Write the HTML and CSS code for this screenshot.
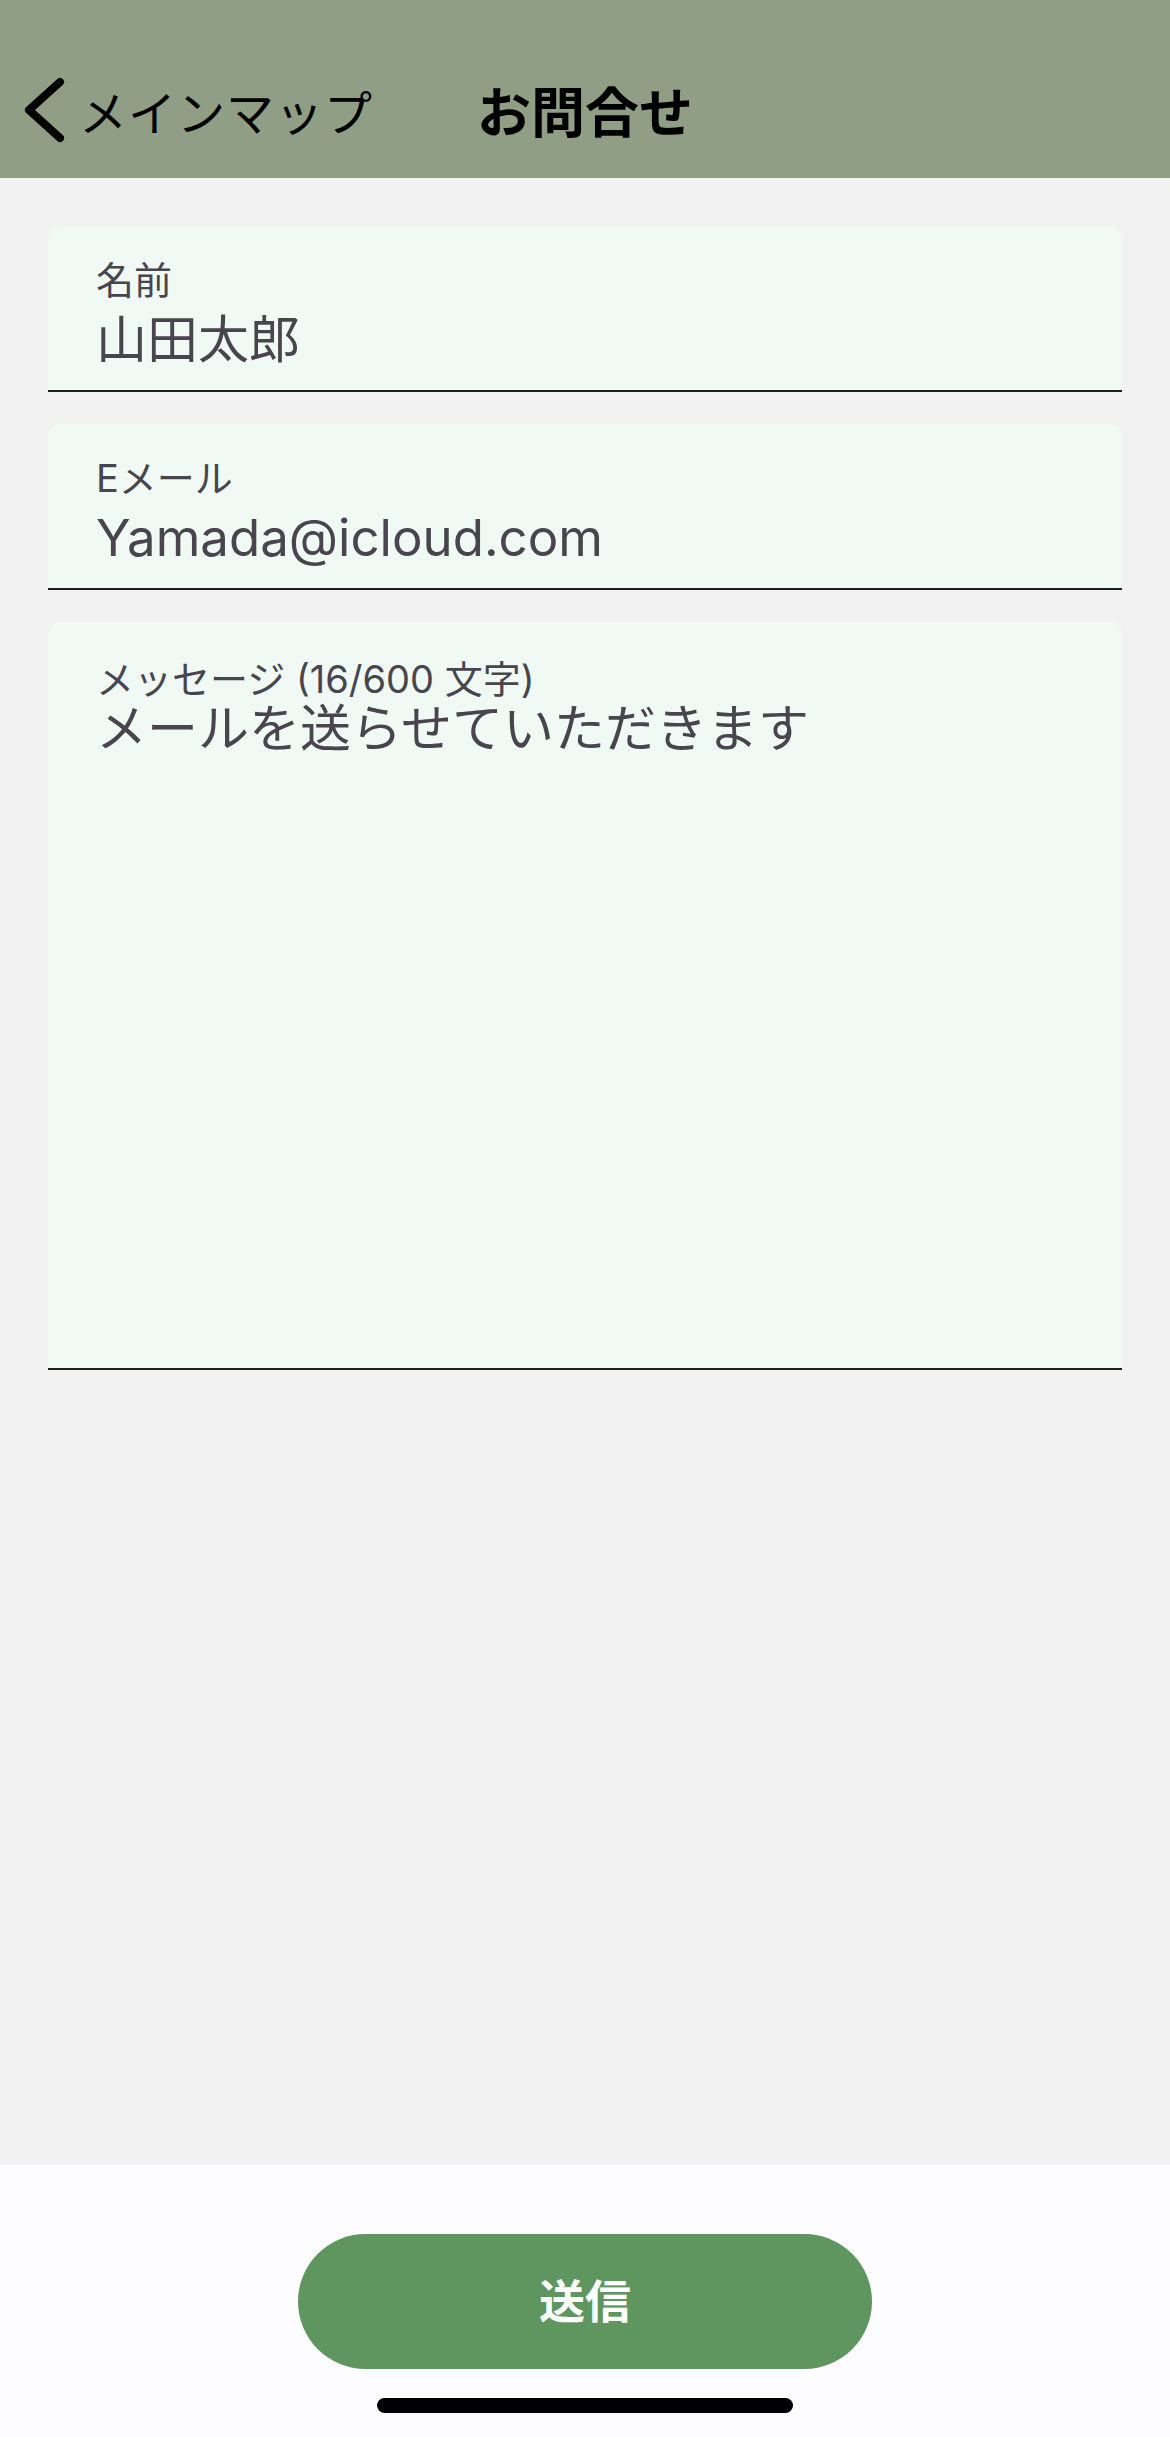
FILE: index.html
```html
<!DOCTYPE html>
<html lang="ja">
<head>
<meta charset="utf-8">
<title>お問合せ</title>
<link rel="stylesheet" href="styles.css">
</head>
<body>
<div class="app">
  <header class="topbar">
    <a class="back" href="#">
      <svg class="chev" width="46" height="68" viewBox="0 0 46 68" aria-hidden="true">
        <polyline points="40,6 9,34 40,62" fill="none" stroke="#000" stroke-width="8" stroke-linecap="round" stroke-linejoin="round"/>
      </svg>
      <span class="back-text">メインマップ</span>
    </a>
    <h1 class="title">お問合せ</h1>
    <div class="spacer"></div>
  </header>

  <main class="form">
    <div class="field">
      <div class="label">名前</div>
      <div class="value">山田太郎</div>
    </div>
    <div class="field">
      <div class="label">Eメール</div>
      <div class="value">Yamada@icloud.com</div>
    </div>
    <div class="field field-multi">
      <div class="label">メッセージ (16/600 文字)</div>
      <div class="value">メールを送らせていただきます</div>
    </div>
  </main>

  <footer class="actions">
    <button class="send" type="button">送信</button>
    <div class="home-indicator"></div>
  </footer>
</div>
</body>
</html>
```

FILE: styles.css
```css
* { box-sizing: border-box; }

html, body {
  margin: 0;
  padding: 0;
}

body {
  background: #f2f2f2;
  font-family: "Inter", "Noto Sans CJK JP", sans-serif;
}

.app {
  min-height: 2437px;
  display: flex;
  flex-direction: column;
}

.topbar {
  height: 178px;
  background: #919e86;
  padding: 42px 0 0 0;
  display: grid;
  grid-template-columns: 1fr auto 1fr;
  align-items: center;
}

.back {
  display: flex;
  align-items: center;
  padding-left: 20px;
  color: #000;
  text-decoration: none;
}

.chev { display: block; }

.back-text {
  margin-left: 13px;
  font-family: "Noto Sans CJK JP", sans-serif;
  font-size: 48px;
  letter-spacing: 1px;
  line-height: 1;
  font-weight: 400;
}

.title {
  margin: 0;
  font-family: "Noto Sans CJK JP", sans-serif;
  font-size: 54px;
  line-height: 1;
  font-weight: 700;
  color: #000;
}

.form {
  flex: 1;
  padding: 48px 48px 0;
  display: flex;
  flex-direction: column;
  gap: 32px;
}

.field {
  background: #f0f9f3;
  border-radius: 13px 13px 0 0;
  border-bottom: 2px solid #1f1f22;
  padding: 32px 40px 22px 48px;
  height: 166px;
  color: #49454f;
}

.label {
  font-size: 38px;
  line-height: 44px;
}

.value {
  margin-top: 10px;
  font-size: 51px;
  line-height: 56px;
}

.field-multi {
  height: 748px;
  padding-top: 35px;
}

.field-multi .value {
  margin-top: 0;
}

.actions {
  height: 272px;
  background: #fdfcff;
  display: flex;
  flex-direction: column;
  align-items: center;
  padding-top: 69px;
}

.send {
  width: 574px;
  height: 135px;
  border: none;
  border-radius: 68px;
  background: #5f9660;
  color: #fff;
  font-family: "Noto Sans CJK JP", sans-serif;
  font-size: 46px;
  font-weight: 700;
  padding: 0 0 8px;
}

.home-indicator {
  margin-top: 29px;
  width: 416px;
  height: 15px;
  border-radius: 8px;
  background: #000;
}
```
